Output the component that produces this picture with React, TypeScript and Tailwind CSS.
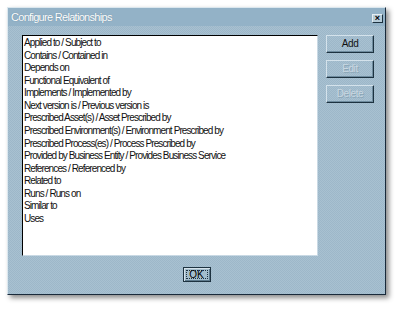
const RELATIONSHIPS = [
  "Applied to / Subject to",
  "Contains / Contained in",
  "Depends on",
  "Functional Equivalent of",
  "Implements / Implemented by",
  "Next version is / Previous version is",
  "Prescribed Asset(s) / Asset Prescribed by",
  "Prescribed Environment(s) / Environment Prescribed by",
  "Prescribed Process(es) / Process Prescribed by",
  "Provided by Business Entity / Provides Business Service",
  "References / Referenced by",
  "Related to",
  "Runs / Runs on",
  "Similar to",
  "Uses",
];

const texture =
  "bg-[conic-gradient(#a8c1d1_25%,#9db7c9_0_50%,#a8c1d1_0_75%,#9db7c9_0)] bg-[length:2px_2px]";

function SideButton({ label, disabled }: { label: string; disabled?: boolean }) {
  return (
    <button
      className={`w-[48px] h-[18px] ${texture} border border-t-[#d4e2eb] border-l-[#d4e2eb] border-r-[#1d3240] border-b-[#1d3240] shadow-[inset_-1px_-1px_0_#6f8c9f] text-[10px] tracking-[-0.4px] leading-none flex items-center justify-center ${
        disabled ? "text-[#c9d8e2] [text-shadow:1px_1px_0_#8aa5b6]" : "text-[#111]"
      }`}
    >
      {label}
    </button>
  );
}

export default function App() {
  return (
    <div className="w-[400px] h-[309px] bg-white pt-[7px] pl-[7px] font-['Liberation_Sans',Arial,sans-serif]">
      <div
        className={`w-[379px] h-[288px] ${texture} border border-t-[#dbe7ee] border-l-[#dbe7ee] border-r-[#18293a] border-b-[#18293a] shadow-[3px_3px_5px_rgba(0,0,0,0.45)] flex flex-col`}
      >
        {/* title bar */}
        <div className="h-[18px] bg-[#93b2c7] flex items-center justify-between pl-[3px] pr-[2px]">
          <span className="text-white text-[11px] tracking-[-0.7px] leading-none [text-shadow:0_0_1px_#5a7c92]">
            Configure Relationships
          </span>
          <div className="w-[11px] h-[9px] bg-[#b7cdda] border border-t-[#e5eef3] border-l-[#e5eef3] border-r-[#1d3240] border-b-[#1d3240] flex items-center justify-center text-[9px] font-bold leading-none text-black mt-[2px]">
            ×
          </div>
        </div>

        <div className="flex pt-[9px] pl-[14px] gap-[8px]">
          <div className="w-[296px] h-[221px] bg-white border border-t-[#000] border-l-[#000] border-r-[#c9d9e4] border-b-[#c9d9e4] pl-[1px] pt-[1px]">
            {RELATIONSHIPS.map((r) => (
              <div key={r} className="text-[10px] tracking-[-0.9px] leading-[12.57px] text-[#111] whitespace-nowrap">
                {r}
              </div>
            ))}
          </div>
          <div className="flex flex-col gap-[7px]">
            <SideButton label="Add" />
            <SideButton label="Edit" disabled />
            <SideButton label="Delete" disabled />
          </div>
        </div>

        <div className="flex justify-center pt-[11px]">
          <button className="w-[28px] h-[15px] bg-[#a4bdcc] border border-[#1d3240] shadow-[inset_1px_1px_0_#d4e2eb,inset_-1px_-1px_0_#5d7a8d] flex items-center justify-center p-[2px]">
            <span className="w-full h-full border border-dotted border-[#1d3240] text-[10px] leading-none text-black flex items-center justify-center">
              OK
            </span>
          </button>
        </div>
      </div>
    </div>
  );
}
